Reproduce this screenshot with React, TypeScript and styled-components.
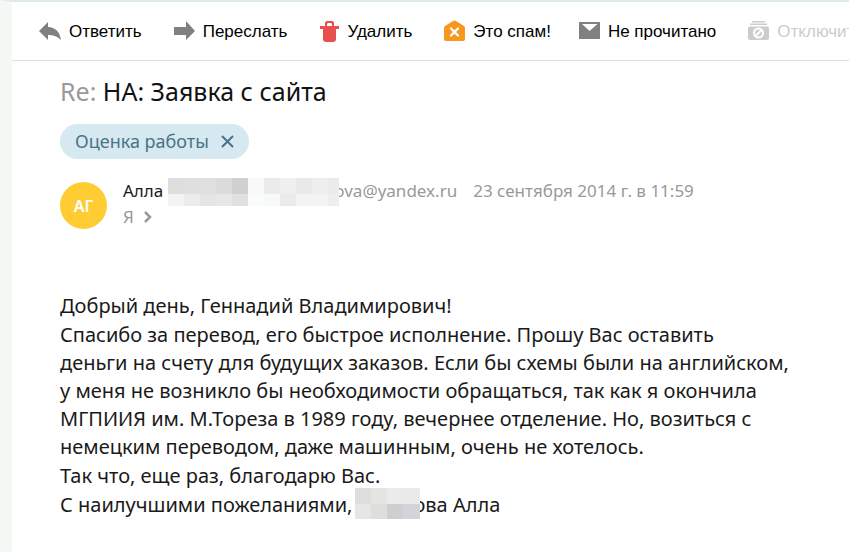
import React from "react";
import styled, { createGlobalStyle } from "styled-components";

const GlobalStyle = createGlobalStyle`
  * { box-sizing: border-box; }
  body {
    margin: 0;
    background: #fff;
    color: #1a1a1a;
    font-family: "Noto Sans", "Open Sans", sans-serif;
    overflow: hidden;
  }
`;

const Page = styled.div`
  min-height: 100vh;
  border-top: 2px solid #deebe6;
  border-left: 12px solid #f4f9f6;
`;

const Toolbar = styled.div`
  display: flex;
  align-items: center;
  height: 59px;
  padding-left: 27px;
  border-bottom: 1px solid #dedede;
  overflow: hidden;
`;

const ToolButton = styled.button<{ $gap: number }>`
  display: flex;
  flex: none;
  align-items: center;
  gap: 8px;
  margin: 0 ${(p) => p.$gap}px 0 0;
  padding: 0;
  border: 0;
  background: none;
  color: #000;
  font: 17px/24px "Liberation Sans", Arial, sans-serif;
  white-space: nowrap;
  cursor: pointer;

  &:disabled {
    color: #ccc;
    cursor: default;
  }
`;

const ToolText = styled.span`
  padding-top: 2px;
`;

const Icon = styled.svg`
  display: block;
  flex: none;
`;

const Message = styled.main`
  padding: 13px 48px 32px;
`;

const Subject = styled.h1`
  margin: 0;
  font-size: 25px;
  font-weight: 400;
  line-height: 34px;
  color: #111;
`;

const Muted = styled.span`
  color: #999;
`;

const Label = styled.div`
  display: inline-flex;
  align-items: center;
  gap: 12px;
  height: 35px;
  margin-top: 16px;
  padding: 0 15px 2px;
  border-radius: 18px;
  background: #d6e9f1;
  color: #4a7386;
  font-size: 18px;
  line-height: 24px;
`;

const RemoveButton = styled.button`
  padding: 2px 0 0;
  border: 0;
  background: none;
  color: inherit;
  cursor: pointer;
`;

const Header = styled.header`
  display: flex;
  gap: 16px;
  margin-top: 19px;
`;

const Avatar = styled.div`
  display: flex;
  flex: none;
  align-items: center;
  justify-content: center;
  width: 47px;
  height: 47px;
  margin-top: 4px;
  border-radius: 50%;
  background: #ffcc33;
  color: #fff;
  font-size: 16px;
  font-weight: 600;
`;

const SenderLine = styled.div`
  display: flex;
  height: 28px;
  font-size: 17px;
  line-height: 25px;
  white-space: nowrap;
`;

const Sender = styled.span`
  margin-right: 5px;
`;

const DateText = styled.time`
  margin-left: 16px;
  color: #999;
`;

const Recipients = styled.button`
  display: flex;
  align-items: center;
  gap: 10px;
  padding: 0;
  border: 0;
  background: none;
  color: #999;
  font: inherit;
  font-size: 17px;
  line-height: 22px;
  cursor: pointer;
`;

const Mosaic = styled.span<{ $columns: number; $width: number; $rows: string; $overlap: number }>`
  position: relative;
  z-index: 1;
  display: inline-grid;
  flex: none;
  grid-template-columns: repeat(${(p) => p.$columns}, 16px) 1fr;
  grid-template-rows: ${(p) => p.$rows};
  width: ${(p) => p.$width}px;
  margin-right: -${(p) => p.$overlap}px;
`;

const Cell = styled.span<{ $color: string }>`
  background: ${(p) => p.$color};
`;

const Body = styled.article`
  display: flex;
  flex-direction: column;
  gap: 1px;
  margin-top: 63px;
  font-size: 20px;
  line-height: 28px;
  color: #1a1a1a;
`;

const Paragraph = styled.p`
  margin: 0;
  white-space: nowrap;
`;

const Signature = styled(Paragraph)`
  display: flex;
  align-items: flex-end;
  height: 28px;
`;

const Closing = styled.span`
  margin-right: 3px;
`;

const senderCells = [
  "#dedede", "#dfdfdf", "#e0e0e0", "#dbdbdb", "#d0d0d0", "#f9f9f9", "#ebebeb", "#efefef", "#ebe9e8", "#eeeeee", "#ebebeb",
  "#f3f3f3", "#ececec", "#e5e5e5", "#e7e7e7", "#e1e1e1", "#fafcfb", "#f8faf9", "#ebebeb", "#f3f3f3", "#f3f3f3", "#eeeeee",
];
const signatureCells = [
  "#dededf", "#e4e4e2", "#ebebeb", "#e9ebea",
  "#e6e6e6", "#dfdedc", "#d1ced2", "#d3d4d7",
];

const ReplyIcon = () => (
  <Icon width="22" height="20" viewBox="0 0 22 20">
    <path d="M0 10 9 1v5c7 0 12 5 13 13-4-4-8-5-13-5v5Z" fill="#808080" />
  </Icon>
);
const ForwardIcon = () => (
  <Icon width="22" height="20" viewBox="0 0 22 20">
    <path d="M1 6h12V0l9 10-9 9v-5H1Z" fill="#808080" />
  </Icon>
);
const TrashIcon = () => (
  <Icon width="19" height="22" viewBox="0 0 19 22">
    <path
      fillRule="evenodd"
      d="M5 6V3q0-2 2-2h5q2 0 2 2v3h5v3h-3v10q0 3-3 3H6q-3 0-3-3V9H0V6ZM7 6h5V4l-1-1H8L7 4Z"
      fill="#e85050"
    />
  </Icon>
);
const SpamIcon = () => (
  <Icon width="21" height="22" viewBox="0 0 21 22">
    <path d="M1 6 9 1q1.500-1 3 0l8 5q1 1 1 2v11q0 2-2 2H2q-2 0-2-2V8q0-1 1-2Z" fill="#f7981d" />
    <path d="m7 8.500 7 7m0-7-7 7" stroke="#fff" strokeWidth="2.400" strokeLinecap="round" />
  </Icon>
);
const UnreadIcon = () => (
  <Icon width="21" height="18" viewBox="0 0 21 18">
    <path d="M0 0h21v17H0Z" fill="#808080" />
    <path d="M3 2h15.500L10.500 9Z" fill="#fff" />
  </Icon>
);
const MuteIcon = () => (
  <Icon width="21" height="20" viewBox="0 0 21 20">
    <path d="M4 0h13v1.500H4ZM2 2.500h17v1.500H2ZM2 5.500h17q2 0 2 2v9q0 2.500-2.500 2.500h-16Q0 19 0 16.500v-9q0-2 2-2Z" fill="#ccc" />
    <circle cx="10.500" cy="12" r="4.500" fill="none" stroke="#fff" strokeWidth="2" />
    <path d="m7.500 15 6-6" stroke="#fff" strokeWidth="2" />
  </Icon>
);

const tools = [
  { text: "Ответить", icon: <ReplyIcon />, gap: 31 },
  { text: "Переслать", icon: <ForwardIcon />, gap: 33 },
  { text: "Удалить", icon: <TrashIcon />, gap: 32 },
  { text: "Это спам!", icon: <SpamIcon />, gap: 28 },
  { text: "Не прочитано", icon: <UnreadIcon />, gap: 32 },
  { text: "Отключить", icon: <MuteIcon />, gap: 0, disabled: true },
];

export default function App() {
  return (
    <Page>
      <GlobalStyle />
      <Toolbar>
        {tools.map((t) => (
          <ToolButton key={t.text} $gap={t.gap} disabled={t.disabled}>
            {t.icon}
            <ToolText>{t.text}</ToolText>
          </ToolButton>
        ))}
      </Toolbar>
      <Message>
        <Subject>
          <Muted>Re:</Muted> НА: Заявка с сайта
        </Subject>
        <Label>
          Оценка работы
          <RemoveButton aria-label="Удалить метку">
            <Icon width="13" height="13" viewBox="0 0 13 13">
              <path d="m1 1 11 11M12 1 1 12" stroke="currentColor" strokeWidth="2" />
            </Icon>
          </RemoveButton>
        </Label>
        <Header>
          <Avatar>АГ</Avatar>
          <div>
            <SenderLine>
              <Sender>Алла</Sender>
              <Mosaic $columns={10} $width={171} $rows="16px 12px" $overlap={5}>
                {senderCells.map((c, i) => (
                  <Cell key={i} $color={c} />
                ))}
              </Mosaic>
              <Muted>ova@yandex.ru</Muted>
              <DateText dateTime="2014-09-23T11:59">23 сентября 2014 г. в 11:59</DateText>
            </SenderLine>
            <Recipients>
              Я
              <Icon width="8" height="12" viewBox="0 0 8 12">
                <path d="m1 1 5 5-5 5" fill="none" stroke="currentColor" strokeWidth="2.500" />
              </Icon>
            </Recipients>
          </div>
        </Header>
        <Body>
          <Paragraph>Добрый день, Геннадий Владимирович!</Paragraph>
          <Paragraph>
            Спасибо за перевод, его быстрое исполнение. Прошу Вас оставить
            <br />
            деньги на счету для будущих заказов. Если бы схемы были на английском,
            <br />
            у меня не возникло бы необходимости обращаться, так как я окончила
            <br />
            МГПИИЯ им. М.Тореза в 1989 году, вечернее отделение. Но, возиться с
            <br />
            немецким переводом, даже машинным, очень не хотелось.
          </Paragraph>
          <Paragraph>Так что, еще раз, благодарю Вас.</Paragraph>
          <Signature>
            <Closing>С наилучшими пожеланиями,</Closing>
            <Mosaic $columns={3} $width={65} $rows="16px 15px" $overlap={7}>
              {signatureCells.map((c, i) => (
                <Cell key={i} $color={c} />
              ))}
            </Mosaic>
            <span>ова Алла</span>
          </Signature>
        </Body>
      </Message>
    </Page>
  );
}
